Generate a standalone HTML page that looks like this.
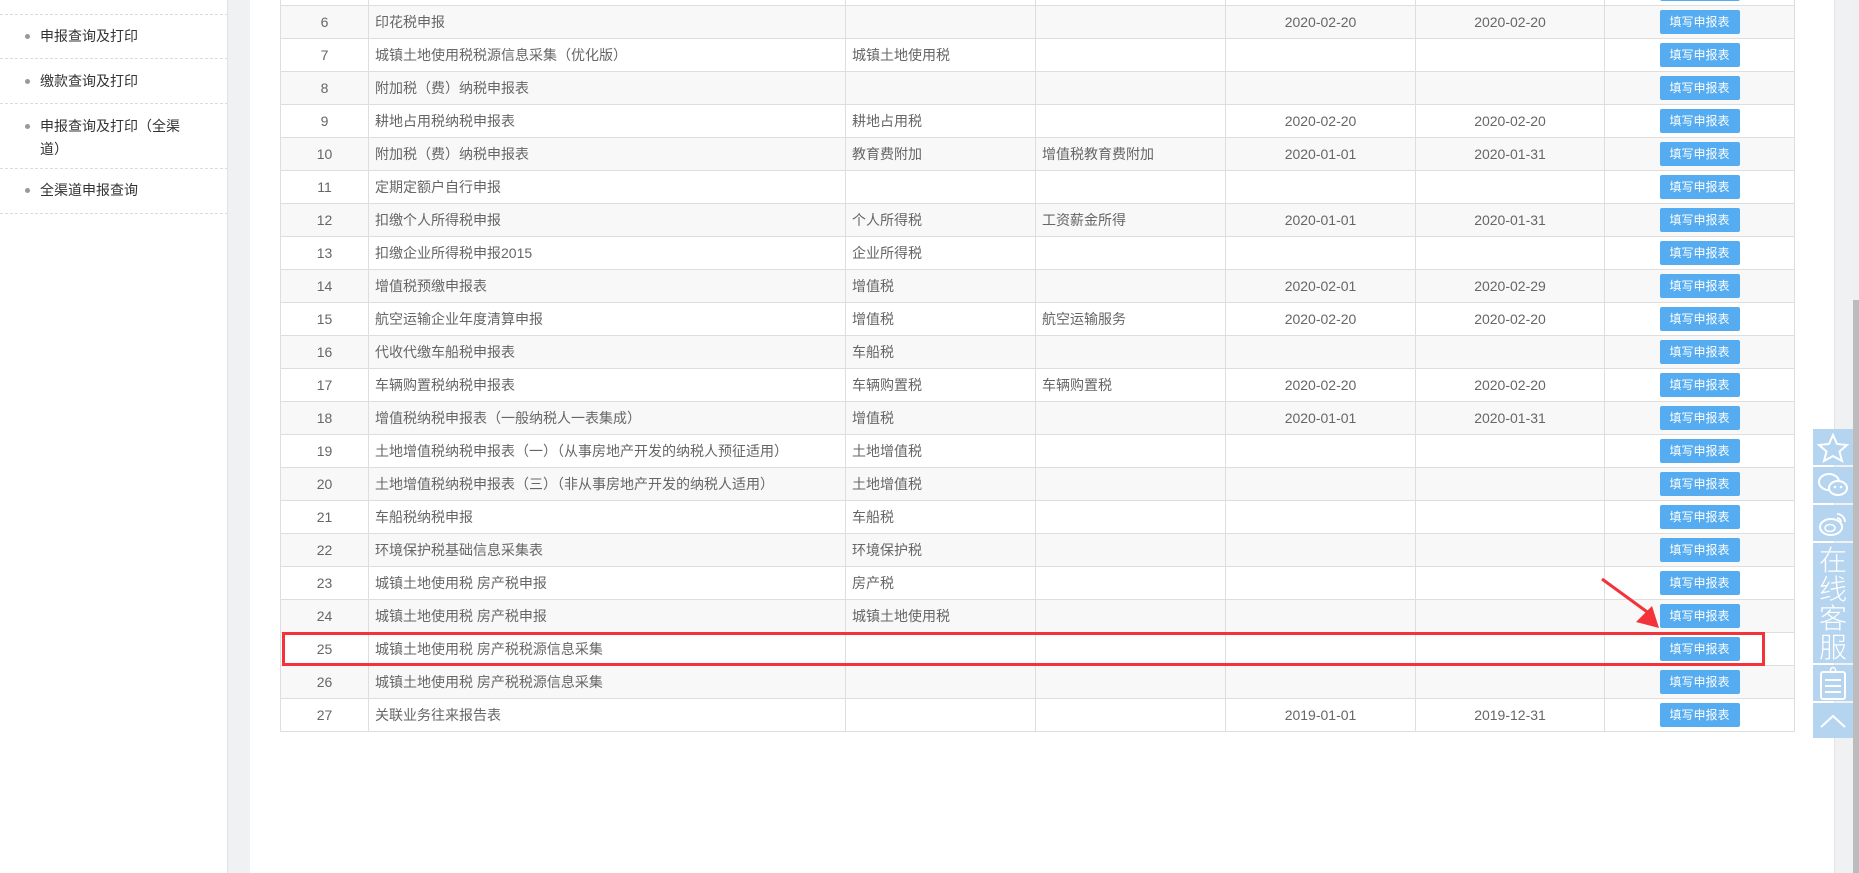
<!DOCTYPE html>
<html><head><meta charset="utf-8">
<style>
*{margin:0;padding:0;box-sizing:border-box}
html,body{width:1859px;height:873px;overflow:hidden;background:#fff;font-family:"Liberation Sans","Noto Sans CJK SC",sans-serif}
#side{position:absolute;left:0;top:0;width:228px;height:873px;background:#fff;border-right:1px solid #e2e2e2}
#gut{position:absolute;left:228px;top:0;width:22px;height:873px;background:#f0f1f3}
#rg{position:absolute;left:1834px;top:0;width:19px;height:873px;background:#f0f1f3;border-left:1px solid #e4e4e4}
#sb{position:absolute;left:1853px;top:0;width:6px;height:873px;background:#f0f0f0}
#sb div{position:absolute;left:0;top:300px;width:6px;height:573px;background:#bcbcbc}
.dl{position:absolute;left:0;width:228px;border-top:1px dashed #dcdcdc}
.it{position:absolute;left:40px;font-size:14px;color:#333;line-height:23px}
.it:before{content:"";position:absolute;left:-15px;top:9px;width:5px;height:5px;border-radius:50%;background:#999}
table{position:absolute;left:280px;top:-28px;border-collapse:collapse;table-layout:fixed;font-size:14px;color:#666}
td{border:1px solid #dedede;height:33px;padding:0 6px;white-space:nowrap;overflow:hidden}
tr:nth-child(even) td{background:#f8f8f8}
td.c{text-align:center}
.btn{display:inline-block;width:80px;height:24px;line-height:24px;background:#55acf0;color:#fff;font-size:12px;border-radius:2px;text-align:center;vertical-align:middle}
#red{position:absolute;left:282px;top:632px;width:1483px;height:34px;border:3px solid #f3323a}
.fb{position:absolute;left:1813px;width:40px;background:#b4d4f0}
</style></head><body>
<div id="side">
<div class="dl" style="top:14px"></div>
<div class="it" style="top:25px">申报查询及打印</div>
<div class="dl" style="top:58px"></div>
<div class="it" style="top:70px">缴款查询及打印</div>
<div class="dl" style="top:103px"></div>
<div class="it" style="top:115px">申报查询及打印（全渠<br>道）</div>
<div class="dl" style="top:168px"></div>
<div class="it" style="top:179px">全渠道申报查询</div>
<div class="dl" style="top:213px"></div>
</div>
<div id="gut"></div>
<div id="rg"></div>
<div id="sb"><div></div></div>
<table>
<colgroup><col style="width:88px"><col style="width:477px"><col style="width:190px"><col style="width:190px"><col style="width:190px"><col style="width:189px"><col style="width:190px"></colgroup>
<tr><td class="c">5</td><td></td><td></td><td></td><td></td><td></td><td class="c"><span class="btn">填写申报表</span></td></tr>
<tr><td class="c">6</td><td>印花税申报</td><td></td><td></td><td class="c">2020-02-20</td><td class="c">2020-02-20</td><td class="c"><span class="btn">填写申报表</span></td></tr>
<tr><td class="c">7</td><td>城镇土地使用税税源信息采集（优化版）</td><td>城镇土地使用税</td><td></td><td></td><td></td><td class="c"><span class="btn">填写申报表</span></td></tr>
<tr><td class="c">8</td><td>附加税（费）纳税申报表</td><td></td><td></td><td></td><td></td><td class="c"><span class="btn">填写申报表</span></td></tr>
<tr><td class="c">9</td><td>耕地占用税纳税申报表</td><td>耕地占用税</td><td></td><td class="c">2020-02-20</td><td class="c">2020-02-20</td><td class="c"><span class="btn">填写申报表</span></td></tr>
<tr><td class="c">10</td><td>附加税（费）纳税申报表</td><td>教育费附加</td><td>增值税教育费附加</td><td class="c">2020-01-01</td><td class="c">2020-01-31</td><td class="c"><span class="btn">填写申报表</span></td></tr>
<tr><td class="c">11</td><td>定期定额户自行申报</td><td></td><td></td><td></td><td></td><td class="c"><span class="btn">填写申报表</span></td></tr>
<tr><td class="c">12</td><td>扣缴个人所得税申报</td><td>个人所得税</td><td>工资薪金所得</td><td class="c">2020-01-01</td><td class="c">2020-01-31</td><td class="c"><span class="btn">填写申报表</span></td></tr>
<tr><td class="c">13</td><td>扣缴企业所得税申报2015</td><td>企业所得税</td><td></td><td></td><td></td><td class="c"><span class="btn">填写申报表</span></td></tr>
<tr><td class="c">14</td><td>增值税预缴申报表</td><td>增值税</td><td></td><td class="c">2020-02-01</td><td class="c">2020-02-29</td><td class="c"><span class="btn">填写申报表</span></td></tr>
<tr><td class="c">15</td><td>航空运输企业年度清算申报</td><td>增值税</td><td>航空运输服务</td><td class="c">2020-02-20</td><td class="c">2020-02-20</td><td class="c"><span class="btn">填写申报表</span></td></tr>
<tr><td class="c">16</td><td>代收代缴车船税申报表</td><td>车船税</td><td></td><td></td><td></td><td class="c"><span class="btn">填写申报表</span></td></tr>
<tr><td class="c">17</td><td>车辆购置税纳税申报表</td><td>车辆购置税</td><td>车辆购置税</td><td class="c">2020-02-20</td><td class="c">2020-02-20</td><td class="c"><span class="btn">填写申报表</span></td></tr>
<tr><td class="c">18</td><td>增值税纳税申报表（一般纳税人一表集成）</td><td>增值税</td><td></td><td class="c">2020-01-01</td><td class="c">2020-01-31</td><td class="c"><span class="btn">填写申报表</span></td></tr>
<tr><td class="c">19</td><td>土地增值税纳税申报表（一）（从事房地产开发的纳税人预征适用）</td><td>土地增值税</td><td></td><td></td><td></td><td class="c"><span class="btn">填写申报表</span></td></tr>
<tr><td class="c">20</td><td>土地增值税纳税申报表（三）（非从事房地产开发的纳税人适用）</td><td>土地增值税</td><td></td><td></td><td></td><td class="c"><span class="btn">填写申报表</span></td></tr>
<tr><td class="c">21</td><td>车船税纳税申报</td><td>车船税</td><td></td><td></td><td></td><td class="c"><span class="btn">填写申报表</span></td></tr>
<tr><td class="c">22</td><td>环境保护税基础信息采集表</td><td>环境保护税</td><td></td><td></td><td></td><td class="c"><span class="btn">填写申报表</span></td></tr>
<tr><td class="c">23</td><td>城镇土地使用税 房产税申报</td><td>房产税</td><td></td><td></td><td></td><td class="c"><span class="btn">填写申报表</span></td></tr>
<tr><td class="c">24</td><td>城镇土地使用税 房产税申报</td><td>城镇土地使用税</td><td></td><td></td><td></td><td class="c"><span class="btn">填写申报表</span></td></tr>
<tr><td class="c">25</td><td>城镇土地使用税 房产税税源信息采集</td><td></td><td></td><td></td><td></td><td class="c"><span class="btn">填写申报表</span></td></tr>
<tr><td class="c">26</td><td>城镇土地使用税 房产税税源信息采集</td><td></td><td></td><td></td><td></td><td class="c"><span class="btn">填写申报表</span></td></tr>
<tr><td class="c">27</td><td>关联业务往来报告表</td><td></td><td></td><td class="c">2019-01-01</td><td class="c">2019-12-31</td><td class="c"><span class="btn">填写申报表</span></td></tr>
</table>
<div id="red"></div>
<svg style="position:absolute;left:0;top:0" width="1859" height="873">
<line x1="1602" y1="579" x2="1650" y2="614" stroke="#f3323a" stroke-width="3"/>
<polygon points="1659,628 1636,622 1652,606" fill="#f3323a"/>
</svg>
<div class="fb" style="top:429px;height:36px"><svg width="40" height="36"><polygon points="20,6 24,15 34,16 26.5,22.5 29,32 20,27 11,32 13.5,22.5 6,16 16,15" fill="none" stroke="#fff" stroke-width="2"/></svg></div>
<div class="fb" style="top:467px;height:36px"><svg width="40" height="36"><ellipse cx="16" cy="15" rx="10" ry="8" fill="none" stroke="#fff" stroke-width="2"/><ellipse cx="25" cy="21" rx="9" ry="7" fill="#b4d4f0" stroke="#fff" stroke-width="2"/><circle cx="22" cy="20" r="1.3" fill="#fff"/><circle cx="28" cy="20" r="1.3" fill="#fff"/></svg></div>
<div class="fb" style="top:505px;height:36px"><svg width="40" height="36"><ellipse cx="18" cy="22" rx="11" ry="8" fill="none" stroke="#fff" stroke-width="2"/><ellipse cx="17" cy="23" rx="5" ry="3.5" fill="none" stroke="#fff" stroke-width="1.5"/><path d="M24 9 a8 8 0 0 1 8 8 M24 13 a4 4 0 0 1 4 4" fill="none" stroke="#fff" stroke-width="1.8"/></svg></div>
<div class="fb" style="top:543px;height:120px;color:#fff;font-size:28px;line-height:29px;text-align:center;padding-top:2px;font-family:'Noto Sans CJK SC',sans-serif;font-weight:300">在<br>线<br>客<br>服</div>
<div class="fb" style="top:665px;height:36px"><svg width="40" height="36"><rect x="8" y="7" width="24" height="27" rx="2" fill="none" stroke="#fff" stroke-width="2"/><line x1="12" y1="15" x2="28" y2="15" stroke="#fff" stroke-width="2"/><line x1="12" y1="21" x2="28" y2="21" stroke="#fff" stroke-width="2"/><line x1="12" y1="27" x2="28" y2="27" stroke="#fff" stroke-width="2"/><circle cx="20" cy="5" r="2.5" fill="none" stroke="#fff" stroke-width="1.5"/></svg></div>
<div class="fb" style="top:703px;height:35px"><svg width="40" height="35"><polyline points="8,24 20,13 32,24" fill="none" stroke="#fff" stroke-width="2"/></svg></div>
</body></html>
